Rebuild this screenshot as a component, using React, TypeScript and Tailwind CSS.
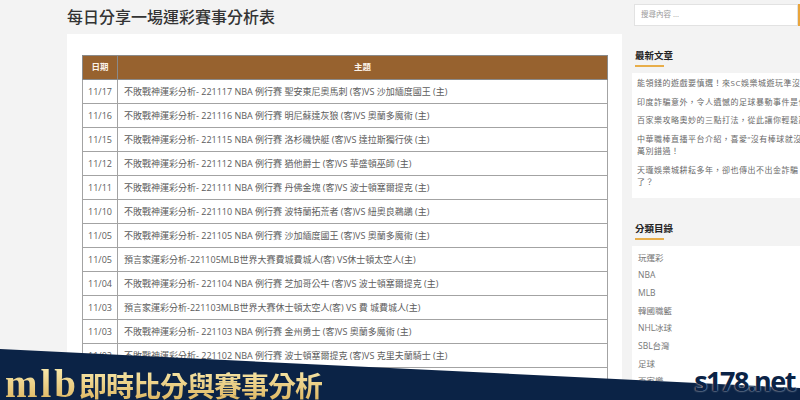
import React from "react";

const rows: [string, string][] = [
  ["11/17", "不敗戰神運彩分析- 221117 NBA 例行賽 聖安東尼奧馬刺 (客)VS 沙加緬度國王 (主)"],
  ["11/16", "不敗戰神運彩分析- 221116 NBA 例行賽 明尼蘇達灰狼 (客)VS 奧蘭多魔術 (主)"],
  ["11/15", "不敗戰神運彩分析- 221115 NBA 例行賽 洛杉磯快艇 (客)VS 達拉斯獨行俠 (主)"],
  ["11/12", "不敗戰神運彩分析- 221112 NBA 例行賽 猶他爵士 (客)VS 華盛頓巫師 (主)"],
  ["11/11", "不敗戰神運彩分析- 221111 NBA 例行賽 丹佛金塊 (客)VS 波士頓塞爾提克 (主)"],
  ["11/10", "不敗戰神運彩分析- 221110 NBA 例行賽 波特蘭拓荒者 (客)VS 紐奧良鵜鶘 (主)"],
  ["11/05", "不敗戰神運彩分析- 221105 NBA 例行賽 沙加緬度國王 (客)VS 奧蘭多魔術 (主)"],
  ["11/05", "預言家運彩分析-221105MLB世界大賽費城費城人(客) VS休士頓太空人(主)"],
  ["11/04", "不敗戰神運彩分析- 221104 NBA 例行賽 芝加哥公牛 (客)VS 波士頓塞爾提克 (主)"],
  ["11/03", "預言家運彩分析-221103MLB世界大賽休士頓太空人(客) VS 費 城費城人(主)"],
  ["11/03", "不敗戰神運彩分析- 221103 NBA 例行賽 金州勇士 (客)VS 奧蘭多魔術 (主)"],
  ["11/02", "不敗戰神運彩分析- 221102 NBA 例行賽 波士頓塞爾提克 (客)VS 克里夫蘭騎士 (主)"],
  ["11/01", "不敗戰神運彩分析- 221101 NBA 例行賽 奧蘭多魔術 (客)VS 夏洛特黃蜂 (主)"],
  ["10/31", "不敗戰神運彩分析- 221031 NBA 例行賽 金州勇士 (客)VS 邁阿密熱火 (主)"],
];

const latest: string[][] = [
  ["能領錢的遊戲要慎選！來SC娛樂城遊玩準沒錯"],
  ["印度詐騙意外，令人遺憾的足球暴動事件是什麼"],
  ["百家樂攻略奧妙的三點打法，從此讓你輕鬆贏錢"],
  ["中華職棒直播平台介紹，喜愛\u201c沒有棒球就沒有生活\u201d的你千", "萬別錯過！"],
  ["天瓏娛樂城耕耘多年，卻也傳出不出金詐騙", "了？"],
];

const cats = ["玩運彩", "NBA", "MLB", "韓國職籃", "NHL冰球", "SBL台灣", "足球", "百家樂"];

export default function App() {
  return (
    <div className="relative w-[800px] h-[400px] overflow-hidden bg-[#f3f3f3] font-['Open_Sans','Noto_Sans_CJK_TC',sans-serif]">
      <div className="flex h-full pl-[67px] gap-[10px]">
        {/* main column */}
        <div className="w-[555px] shrink-0 flex flex-col">
          <h1 className="shrink-0 h-[34px] pt-[6px] text-[16px] leading-[20px] text-[#333] font-medium font-['Noto_Sans_CJK_TC',sans-serif]">
            每日分享一場運彩賽事分析表
          </h1>
          <div className="flex-1 min-h-0 overflow-hidden bg-white pt-[21px] pl-[15px] pr-[14px]">
            <table className="w-full border-collapse">
              <thead>
                <tr className="h-[24px] bg-[#97622f] text-[#fbf3ea] text-[8.5px] font-bold">
                  <th className="w-[35px] border border-[#8a8a8a] font-bold">日期</th>
                  <th className="border border-[#8a8a8a] font-bold">主題</th>
                </tr>
              </thead>
              <tbody>
                {rows.map(([d, t], i) => (
                  <tr key={i} className="h-[24px] text-[9px] text-[#5c5c5c]">
                    <td className="border border-[#a3a3a3] text-center whitespace-nowrap">{d}</td>
                    <td className="border border-[#a3a3a3] px-[6px] whitespace-nowrap">{t}</td>
                  </tr>
                ))}
              </tbody>
            </table>
          </div>
        </div>

        {/* sidebar */}
        <div className="w-[240px] shrink-0 pt-[4px]">
          <div className="flex ml-[2px]">
            <div className="w-[164px] h-[22px] bg-white border border-[#e2e2e2] flex items-center pl-[6px] text-[7.5px] text-[#9a9a9a]">
              搜尋內容 ...
            </div>
            <div className="w-[30px] h-[22px] bg-[#e9a53c]" />
          </div>

          <div className="mt-[24px] pl-[3px]">
            <div className="text-[9.5px] leading-[12px] font-bold text-[#222]">最新文章</div>
            <div className="mt-[3px] w-[29px] h-[2px] bg-[#e8ae4a]" />
          </div>
          <div className="mt-[6px] bg-white pl-[5px] pt-[4px] pb-[9px] flex flex-col gap-[6px]">
            {latest.map((lines, i) => (
              <div key={i} className="text-[8px] leading-[12.5px] text-[#6a6a6a] tracking-[0.5px] whitespace-nowrap">
                {lines.map((l, j) => (
                  <div key={j}>{l}</div>
                ))}
              </div>
            ))}
          </div>

          <div className="mt-[25px] pl-[3px]">
            <div className="text-[9.5px] leading-[12px] font-bold text-[#222]">分類目錄</div>
            <div className="mt-[3px] w-[29px] h-[2px] bg-[#e8ae4a]" />
          </div>
          <div className="mt-[6px] bg-white pl-[6px] pt-[3px] h-[200px]">
            {cats.map((c) => (
              <div key={c} className="text-[8.5px] leading-[17.7px] text-[#777]">
                {c}
              </div>
            ))}
          </div>
        </div>
      </div>

      {/* banner overlay */}
      <div className="absolute left-0 bottom-0 w-full h-[51px] bg-[#0b2346] [clip-path:polygon(0_0,100%_39px,100%_100%,0_100%)]" />
      <div className="absolute left-[5px] top-[364px] flex items-baseline whitespace-nowrap bg-linear-to-b from-[#fbefb4] to-[#dcb45c] bg-clip-text text-transparent">
        <span className="font-['Liberation_Serif',serif] font-bold text-[39px] leading-none tracking-[3px]">mlb</span>
        <span className="font-['Noto_Sans_CJK_TC',sans-serif] font-bold text-[28px] leading-none tracking-[-1px]">即時比分與賽事分析</span>
      </div>
      <div className="absolute right-[5px] top-[367px] font-['Open_Sans',sans-serif] font-bold text-[27px] leading-[27px] tracking-[-1.5px] text-[#0b2346] [text-shadow:0_0_2px_#ffffff]">
        s178.net
      </div>
    </div>
  );
}
